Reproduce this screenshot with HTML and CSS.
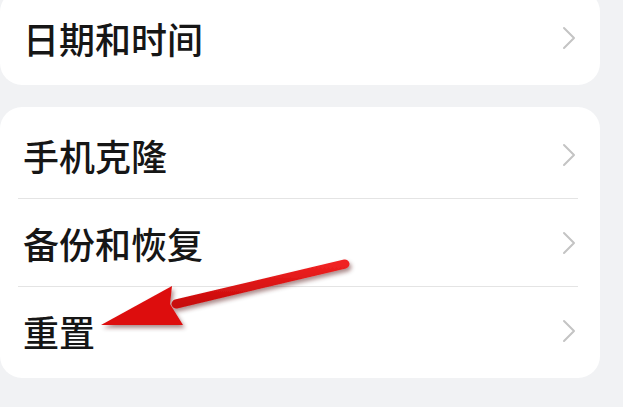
FILE: index.html
```html
<!DOCTYPE html>
<html>
	<head>
		<meta charset="UTF-8">
		<title>设置</title>
		<link rel="stylesheet" href="styles.css">
	</head>
	<body>
		<div class="page">
			<div class="card">
				<div class="row"><span class="label">日期和时间</span><span class="chev"><svg width="14" height="24" viewBox="0 0 14 24"><path d="M2 2 L12 12 L2 22" /></svg></span></div>
			</div>

			<div class="card">
				<div class="row"><span class="label">手机克隆</span><span class="chev"><svg width="14" height="24" viewBox="0 0 14 24"><path d="M2 2 L12 12 L2 22" /></svg></span></div>
				<div class="line"></div>
				<div class="row"><span class="label">备份和恢复</span><span class="chev"><svg width="14" height="24" viewBox="0 0 14 24"><path d="M2 2 L12 12 L2 22" /></svg></span></div>
				<div class="line"></div>
				<div class="row"><span class="label">重置</span><span class="chev"><svg width="14" height="24" viewBox="0 0 14 24"><path d="M2 2 L12 12 L2 22" /></svg></span></div>
			</div>

			<div class="card"></div>

			<!-- 标注用的红色箭头 -->
			<svg class="mark" width="623" height="407" viewBox="0 0 623 407">
				<defs>
					<filter id="shadow" x="-20%" y="-20%" width="140%" height="160%">
						<feDropShadow dx="2" dy="3" stdDeviation="2" flood-color="#400" flood-opacity="0.45" />
					</filter>
					<linearGradient id="red" x1="0" y1="0" x2="0" y2="1">
						<stop offset="0" stop-color="#f02222" />
						<stop offset="1" stop-color="#c80a0a" />
					</linearGradient>
				</defs>
				<g filter="url(#shadow)">
					<line x1="176" y1="314" x2="345" y2="274" stroke="url(#red)" stroke-width="9" stroke-linecap="round" />
					<polygon points="101,335 172,296 170,314 183,335" fill="#dd1111" />
				</g>
			</svg>
		</div>
	</body>
</html>
```

FILE: styles.css
```css
*{
    margin: 0;
    padding: 0;
    box-sizing: border-box;
}
body{
    background: #f1f2f4;
    font-family: "Noto Sans CJK SC", "Noto Sans", sans-serif;
    overflow: hidden;
}
.page{
    position: relative;
    width: 623px;
    height: 407px;
    padding-top: 0;
}
.page > .card:first-child{
    margin-top: -10px;
}
.card{
    width: 600px;
    background: #fff;
    border-radius: 22px;
    padding: 4px 0;
    margin-bottom: 22px;
}
.row{
    height: 87px;
    display: flex;
    align-items: center;
    justify-content: space-between;
    padding: 0 24px 0 23px;
}
.label{
    font-size: 36px;
    font-weight: 500;
    color: #161616;
}
.chev{
    display: flex;
    align-items: center;
}
.chev path{
    fill: none;
    stroke: #c4c4c4;
    stroke-width: 2;
    stroke-linecap: round;
    stroke-linejoin: round;
}
.line{
    height: 1px;
    background: #e4e4e4;
    margin: 0 22px 0 18px;
}
.mark{
    position: absolute;
    top: 0;
    left: 0;
    pointer-events: none;
}
```
